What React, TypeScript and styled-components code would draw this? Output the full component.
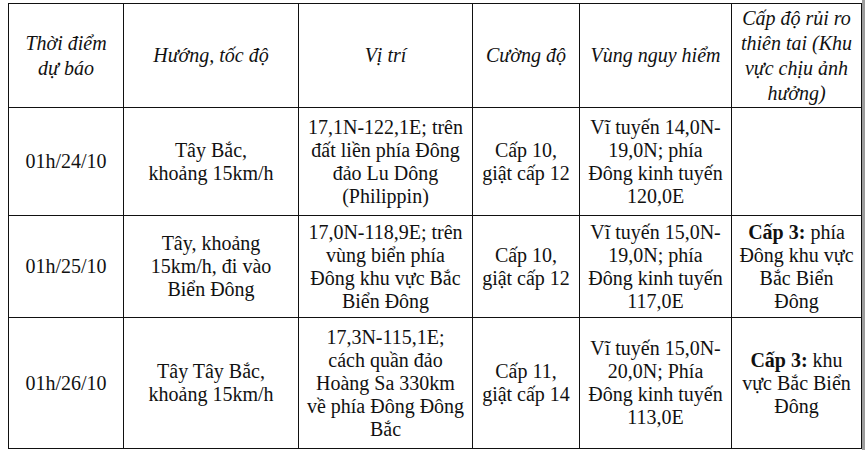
import React from 'react'
import styled, { createGlobalStyle } from 'styled-components'

const GlobalStyle = createGlobalStyle`
  html, body {
    margin: 0;
    padding: 0;
    background: #fff;
  }
  body {
    font-family: 'Liberation Serif', 'Times New Roman', serif;
    color: #111;
  }
`

const Page = styled.div`
  width: 854px;
  height: 450px;
  padding: 3px 0 0 8px;
  box-sizing: border-box;
  width: 865px;
  border-right: 3px solid #9c9c9c;
`

const Table = styled.table`
  width: 853px;
  border-collapse: collapse;
  table-layout: fixed;
  font-size: 20px;
`

const HeaderCell = styled.th`
  border: 1px solid #111;
  font-weight: normal;
  font-style: italic;
  line-height: 25px;
  text-align: center;
  vertical-align: middle;
  padding: 0 4px;
`

const Row = styled.tr<{ $height: number }>`
  height: ${(p) => p.$height}px;
`

const Cell = styled.td`
  border: 1px solid #111;
  line-height: 23px;
  text-align: center;
  vertical-align: middle;
  padding: 0 4px;
`

const Strong = styled.b`
  font-weight: bold;
`

const widths = [115, 175, 174, 107, 152, 130]

const headers: string[][] = [
  ['Thời điểm', 'dự báo'],
  ['Hướng, tốc độ'],
  ['Vị trí'],
  ['Cường độ'],
  ['Vùng nguy hiểm'],
  ['Cấp độ rủi ro', 'thiên tai (Khu', 'vực chịu ảnh', 'hưởng)'],
]

type Line = string | { bold: string; rest: string }

const rows: { height: number; cells: Line[][] }[] = [
  {
    height: 108,
    cells: [
      ['01h/24/10'],
      ['Tây Bắc,', 'khoảng 15km/h'],
      ['17,1N-122,1E; trên', 'đất liền phía Đông', 'đảo Lu Dông', '(Philippin)'],
      ['Cấp 10,', 'giật cấp 12'],
      ['Vĩ tuyến 14,0N-', '19,0N; phía', 'Đông kinh tuyến', '120,0E'],
      [],
    ],
  },
  {
    height: 102,
    cells: [
      ['01h/25/10'],
      ['Tây, khoảng', '15km/h, đi vào', 'Biển Đông'],
      ['17,0N-118,9E; trên', 'vùng biển phía', 'Đông khu vực Bắc', 'Biển Đông'],
      ['Cấp 10,', 'giật cấp 12'],
      ['Vĩ tuyến 15,0N-', '19,0N; phía', 'Đông kinh tuyến', '117,0E'],
      [{ bold: 'Cấp 3:', rest: ' phía' }, 'Đông khu vực', 'Bắc Biển', 'Đông'],
    ],
  },
  {
    height: 131,
    cells: [
      ['01h/26/10'],
      ['Tây Tây Bắc,', 'khoảng 15km/h'],
      ['17,3N-115,1E;', 'cách quần đảo', 'Hoàng Sa 330km', 'về phía Đông Đông', 'Bắc'],
      ['Cấp 11,', 'giật cấp 14'],
      ['Vĩ tuyến 15,0N-', '20,0N; Phía', 'Đông kinh tuyến', '113,0E'],
      [{ bold: 'Cấp 3:', rest: ' khu' }, 'vực Bắc Biển', 'Đông'],
    ],
  },
]

const renderLines = (lines: Line[]) =>
  lines.map((line, i) => (
    <React.Fragment key={i}>
      {i > 0 && <br />}
      {typeof line === 'string' ? (
        line
      ) : (
        <>
          <Strong>{line.bold}</Strong>
          {line.rest}
        </>
      )}
    </React.Fragment>
  ))

export default function App() {
  return (
    <>
      <GlobalStyle />
      <Page>
        <Table>
          <colgroup>
            {widths.map((w, i) => (
              <col key={i} style={{ width: w }} />
            ))}
          </colgroup>
          <thead>
            <Row $height={104}>
              {headers.map((h, i) => (
                <HeaderCell key={i}>{renderLines(h)}</HeaderCell>
              ))}
            </Row>
          </thead>
          <tbody>
            {rows.map((r, i) => (
              <Row key={i} $height={r.height}>
                {r.cells.map((c, j) => (
                  <Cell key={j}>{renderLines(c)}</Cell>
                ))}
              </Row>
            ))}
          </tbody>
        </Table>
      </Page>
    </>
  )
}
